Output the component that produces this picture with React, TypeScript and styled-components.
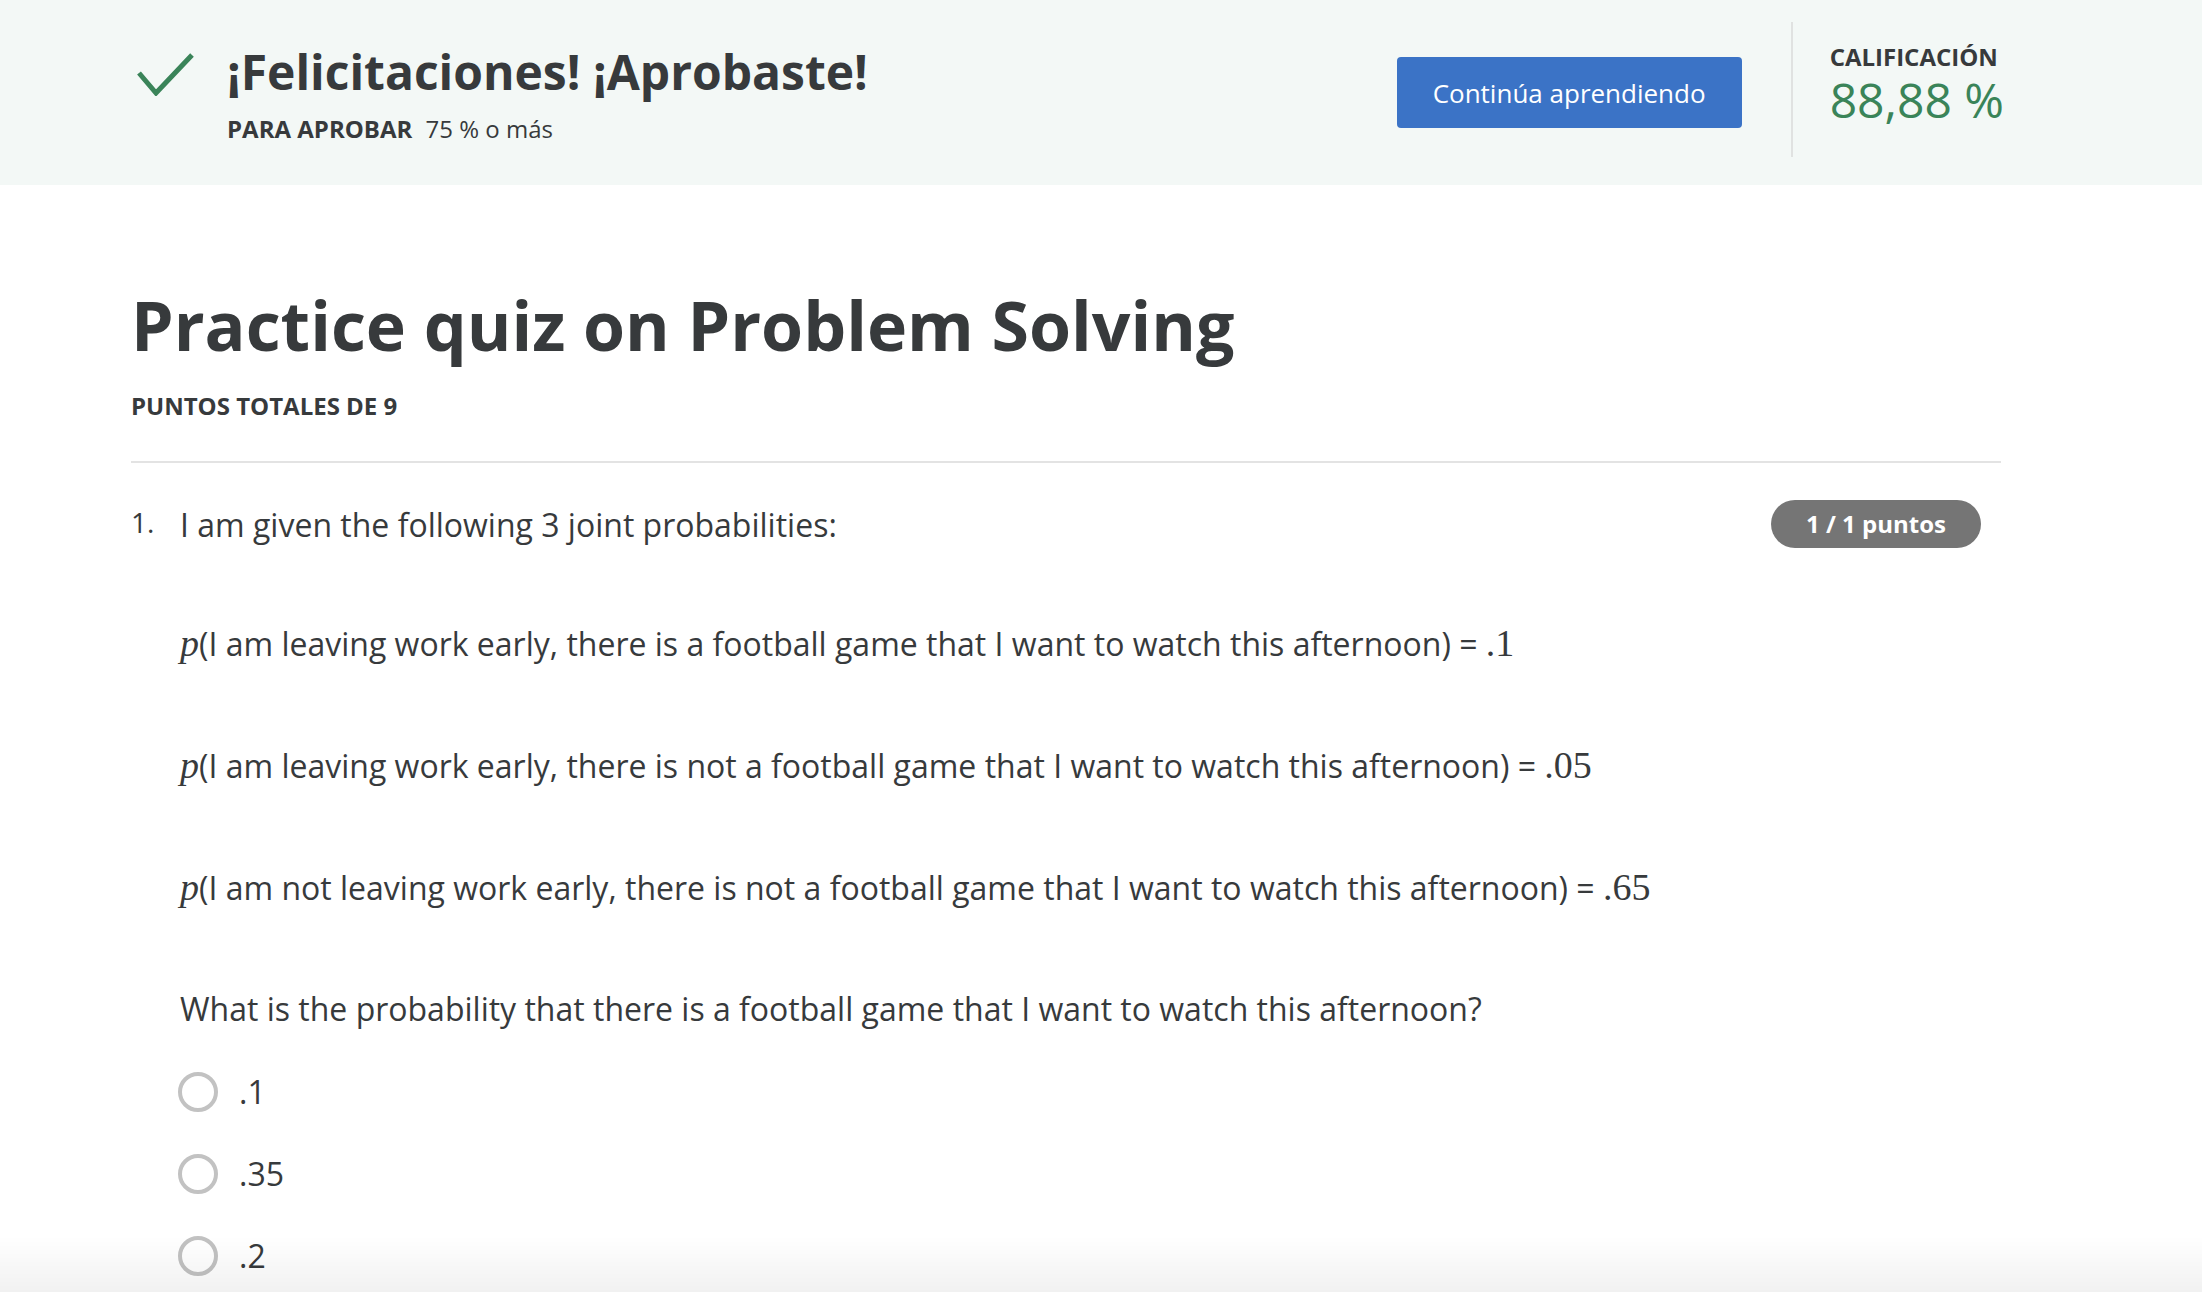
import React from "react";
import styled, { createGlobalStyle } from "styled-components";

const Global = createGlobalStyle`
  html, body { margin: 0; padding: 0; background: #ffffff; }
  body { font-family: "Open Sans", "Noto Sans", sans-serif; color: #373a3c; }
  * { box-sizing: border-box; }
`;

const GREEN = "#3a8459";

const Banner = styled.header`
  background: #f3f8f6;
  height: 185px;
`;

const BannerInner = styled.div`
  margin-left: 136px;
  width: 1868px;
  height: 100%;
  display: flex;
  align-items: center;
`;

const Passed = styled.div`
  margin-right: auto;
  display: flex;
  align-items: flex-start;
  gap: 33px;
`;

const CheckIcon = styled.svg`
  flex-shrink: 0;
  margin-top: 11px;
`;

const PassedTitle = styled.h2`
  margin: 0;
  font-size: 48px;
  line-height: 62px;
  font-weight: 700;
  color: #373a3c;
`;

const Requirement = styled.div`
  margin-top: 10px;
  font-size: 24px;
  line-height: 32px;
  color: #373a3c;
`;

const ReqLabel = styled.span`
  font-weight: 700;
  margin-right: 7px;
`;

const ContinueButton = styled.button`
  width: 345px;
  height: 71px;
  border: 0;
  border-radius: 4px;
  background: #3b73c6;
  color: #ffffff;
  font-family: "Open Sans", "Noto Sans", sans-serif;
  font-size: 26px;
  font-weight: 400;
  cursor: pointer;
`;

const Separator = styled.div`
  align-self: flex-start;
  margin: 22px 37px 0 49px;
  width: 2px;
  height: 135px;
  background: #e0e2e1;
`;

const Grade = styled.div`
  align-self: flex-start;
  margin-top: 42px;
  display: flex;
  flex-direction: column;
`;

const GradeLabel = styled.div`
  font-size: 24px;
  line-height: 30px;
  font-weight: 700;
  color: #373a3c;
`;

const GradeValue = styled.div`
  font-size: 48px;
  line-height: 56px;
  font-weight: 400;
  color: ${GREEN};
`;

const Main = styled.main`
  margin-left: 131px;
  width: 1870px;
  padding-top: 98px;
`;

const PageTitle = styled.h1`
  margin: 0;
  font-size: 68px;
  line-height: 84px;
  font-weight: 700;
  color: #373a3c;
`;

const TotalPoints = styled.div`
  margin-top: 23px;
  font-size: 24px;
  line-height: 32px;
  font-weight: 700;
  color: #373a3c;
`;

const Divider = styled.hr`
  margin: 39px 0 0;
  border: 0;
  height: 2px;
  background: #e3e3e3;
`;

const Question = styled.section`
  display: flex;
  align-items: flex-start;
  margin-top: 37px;
`;

const Number = styled.div`
  width: 49px;
  flex-shrink: 0;
  padding-top: 1px;
  font-size: 28px;
  line-height: 42px;
  color: #373a3c;
`;

const Body = styled.div`
  flex: 1;
  padding-top: 1px;
  font-size: 32px;
  line-height: 48px;
  color: #373a3c;
`;

const Para = styled.p<{ $gap: number }>`
  margin: ${(p) => p.$gap}px 0 0;
  height: 48px;
`;

const MathVar = styled.span`
  font-family: "Liberation Serif", "DejaVu Serif", serif;
  font-style: italic;
  font-size: 38px;
  line-height: 0;
`;

const MathNum = styled.span`
  font-family: "Liberation Serif", "DejaVu Serif", serif;
  font-size: 38px;
  line-height: 0;
`;

const Badge = styled.div`
  flex-shrink: 0;
  margin: 0 20px 0 40px;
  height: 48px;
  padding: 0 35px;
  border-radius: 24px;
  background: #757575;
  color: #ffffff;
  font-size: 24px;
  line-height: 48px;
  font-weight: 700;
`;

const Options = styled.div`
  margin-top: 35px;
  display: flex;
  flex-direction: column;
  gap: 34px;
`;

const Option = styled.label`
  display: flex;
  align-items: center;
  gap: 21px;
  height: 48px;
  margin-left: -2px;
  cursor: pointer;
`;

const Radio = styled.span`
  width: 40px;
  height: 40px;
  border-radius: 50%;
  border: 4px solid #c2c2c2;
  flex-shrink: 0;
`;

const BottomShade = styled.div`
  position: fixed;
  left: 0;
  right: 0;
  bottom: 0;
  height: 56px;
  background: linear-gradient(rgba(0, 0, 0, 0), rgba(0, 0, 0, 0.055));
  pointer-events: none;
`;

const statements = [
  { text: "I am leaving work early, there is a football game that I want to watch this afternoon", value: ".1", gap: 71 },
  { text: "I am leaving work early, there is not a football game that I want to watch this afternoon", value: ".05", gap: 74 },
  { text: "I am not leaving work early, there is not a football game that I want to watch this afternoon", value: ".65", gap: 74 },
];

const choices = [".1", ".35", ".2"];

export default function App() {
  return (
    <>
      <Global />
      <Banner>
        <BannerInner>
          <Passed>
            <CheckIcon width="58" height="44" viewBox="0 0 58 44">
              <polyline points="3,21 20,41 56,3" fill="none" stroke={GREEN} strokeWidth="5" />
            </CheckIcon>
            <div>
              <PassedTitle>¡Felicitaciones! ¡Aprobaste!</PassedTitle>
              <Requirement>
                <ReqLabel>PARA APROBAR</ReqLabel> 75 % o más
              </Requirement>
            </div>
          </Passed>
          <ContinueButton>Continúa aprendiendo</ContinueButton>
          <Separator />
          <Grade>
            <GradeLabel>CALIFICACIÓN</GradeLabel>
            <GradeValue>88,88 %</GradeValue>
          </Grade>
        </BannerInner>
      </Banner>
      <Main>
        <PageTitle>Practice quiz on Problem Solving</PageTitle>
        <TotalPoints>PUNTOS TOTALES DE 9</TotalPoints>
        <Divider />
        <Question>
          <Number>1.</Number>
          <Body>
            <Para $gap={0}>I am given the following 3 joint probabilities:</Para>
            {statements.map((s) => (
              <Para key={s.value} $gap={s.gap}>
                <MathVar>p</MathVar>({s.text}) = <MathNum>{s.value}</MathNum>
              </Para>
            ))}
            <Para $gap={73}>What is the probability that there is a football game that I want to watch this afternoon?</Para>
            <Options>
              {choices.map((c) => (
                <Option key={c}>
                  <Radio />
                  {c}
                </Option>
              ))}
            </Options>
          </Body>
          <Badge>1 / 1 puntos</Badge>
        </Question>
      </Main>
      <BottomShade />
    </>
  );
}
